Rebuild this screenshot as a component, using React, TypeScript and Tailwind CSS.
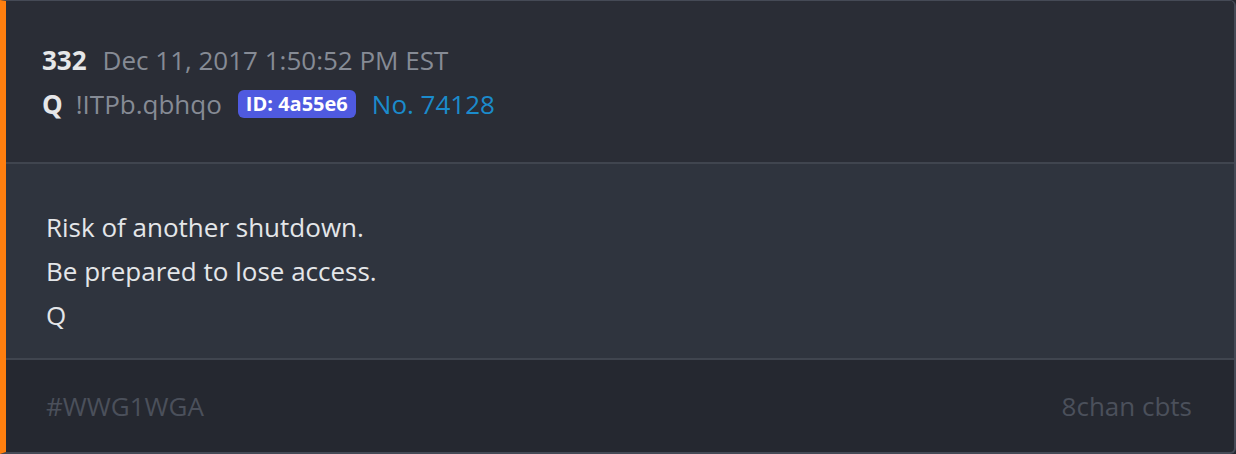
export default function App() {
  return (
    <div className="w-[1236px] h-[454px] bg-[#252830] font-['Open_Sans',sans-serif]">
      <div className="h-full flex flex-col border-l-[6px] border-l-[#ff7f0f] border-t border-r-2 border-b-2 border-t-[#454a56] border-r-[#454a56] border-b-[#454a56] rounded-r-[6px] overflow-hidden">
        {/* header */}
        <div className="bg-[#2a2d36] pl-[36px] pt-[37px] pb-[36px] border-b-2 border-[#40454f]">
          <div className="flex items-center h-[44px] text-[26px]">
            <span className="font-bold text-[#e6e7e9]">332</span>
            <span className="ml-[16px] text-[#868b95]">Dec 11, 2017 1:50:52 PM EST</span>
          </div>
          <div className="flex items-center h-[44px] text-[26px]">
            <span className="font-bold text-[#e6e7e9]">Q</span>
            <span className="ml-[13px] text-[#868b95]">!ITPb.qbhqo</span>
            <span className="ml-[16px] bg-[#4f5ae0] text-white font-bold text-[20px] leading-none rounded-[6px] px-[8px] py-[4px]">ID: 4a55e6</span>
            <span className="ml-[16px] text-[#1b8bcc]">No. 74128</span>
          </div>
        </div>
        {/* body */}
        <div className="bg-[#2f343e] pl-[40px] pt-[41px] pb-[21px] border-b-2 border-[#40454f] text-[26px] leading-[44px] text-[#e4e6e9]">
          <p>Risk of another shutdown.</p>
          <p>Be prepared to lose access.</p>
          <p>Q</p>
        </div>
        {/* footer */}
        <div className="flex-1 flex items-center justify-between pl-[40px] pr-[42px] text-[26px] text-[#4b505b]">
          <span>#WWG1WGA</span>
          <span>8chan cbts</span>
        </div>
      </div>
    </div>
  )
}
